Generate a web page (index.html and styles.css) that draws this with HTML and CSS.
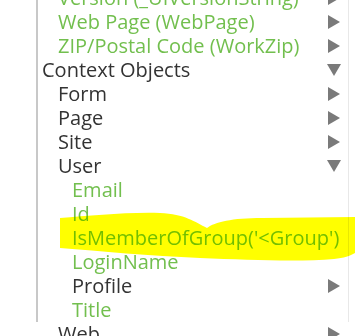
FILE: index.html
```html
<!DOCTYPE html>
<html lang="en">
<head>
    <meta charset="UTF-8">
    <title>Context Objects</title>
    <link rel="stylesheet" href="styles.css">
</head>
<body>
    <div class="panel">
        <ul class="tree">
            <li class="row lvl1 field"><span>Version (_UIVersionString)</span><svg class="arrow" viewBox="0 0 14 14"><path d="M1 0 L13 7 L1 14 Z"/></svg></li>
            <li class="row lvl1 field"><span>Web Page (WebPage)</span><svg class="arrow" viewBox="0 0 14 14"><path d="M1 0 L13 7 L1 14 Z"/></svg></li>
            <li class="row lvl1 field"><span>ZIP/Postal Code (WorkZip)</span><svg class="arrow" viewBox="0 0 14 14"><path d="M1 0 L13 7 L1 14 Z"/></svg></li>
            <li class="row lvl0"><span>Context Objects</span><svg class="arrow" viewBox="0 0 14 14"><path d="M0 1 L14 1 L7 13 Z"/></svg></li>
            <li class="row lvl1"><span>Form</span><svg class="arrow" viewBox="0 0 14 14"><path d="M1 0 L13 7 L1 14 Z"/></svg></li>
            <li class="row lvl1"><span>Page</span><svg class="arrow" viewBox="0 0 14 14"><path d="M1 0 L13 7 L1 14 Z"/></svg></li>
            <li class="row lvl1"><span>Site</span><svg class="arrow" viewBox="0 0 14 14"><path d="M1 0 L13 7 L1 14 Z"/></svg></li>
            <li class="row lvl1"><span>User</span><svg class="arrow" viewBox="0 0 14 14"><path d="M0 1 L14 1 L7 13 Z"/></svg></li>
            <li class="row lvl2 field"><span>Email</span></li>
            <li class="row lvl2 field"><span>Id</span></li>
            <li class="row lvl2 field"><span>IsMemberOfGroup('&lt;Group')</span></li>
            <li class="row lvl2 field"><span>LoginName</span></li>
            <li class="row lvl2"><span>Profile</span><svg class="arrow" viewBox="0 0 14 14"><path d="M1 0 L13 7 L1 14 Z"/></svg></li>
            <li class="row lvl2 field"><span>Title</span></li>
            <li class="row lvl1"><span>Web</span><svg class="arrow" viewBox="0 0 14 14"><path d="M1 0 L13 7 L1 14 Z"/></svg></li>
        </ul>
    </div>
    <!-- marker highlight drawn over the IsMemberOfGroup row -->
    <svg class="marker" viewBox="0 0 355 336">
        <path d="M60 218 C90 216 125 212 160 213 C185 214 195 222 207 228 C215 222 232 218 262 218 L355 217 L355 253 C350 256 344 258 334 259 C300 262 250 260 200 258 C150 256 100 251 60 248 Z"/>
    </svg>
</body>
</html>
```

FILE: styles.css
```css
body {
    margin: 0;
    background: #ffffff;
    font-family: 'Open Sans', 'Noto Sans', sans-serif;
    font-size: 20px;
    line-height: 24px;
    color: #333333;
    overflow: hidden;
    height: 336px;
}
.panel {
    margin-left: 36px;
    width: 310px;
    height: 336px;
    border-left: 2px solid #c8c8c8;
    border-right: 1px solid #e8e8e8;
}
.tree {
    list-style: none;
    margin: -14px 0 0 0;
    padding: 0;
}
.row {
    display: flex;
    align-items: center;
    justify-content: space-between;
    height: 24px;
    padding-right: 7px;
    white-space: nowrap;
}
.lvl0 { padding-left: 4px; }
.lvl1 { padding-left: 20px; }
.lvl2 { padding-left: 34px; }
.field { color: #72bf4e; }
.arrow {
    width: 14px;
    height: 14px;
    margin-top: -1px;
    fill: #7a7a7a;
    flex: none;
}
.marker {
    position: absolute;
    left: 0;
    top: 0;
    width: 355px;
    height: 336px;
    fill: #ffff00;
    mix-blend-mode: multiply;
    pointer-events: none;
}
```
